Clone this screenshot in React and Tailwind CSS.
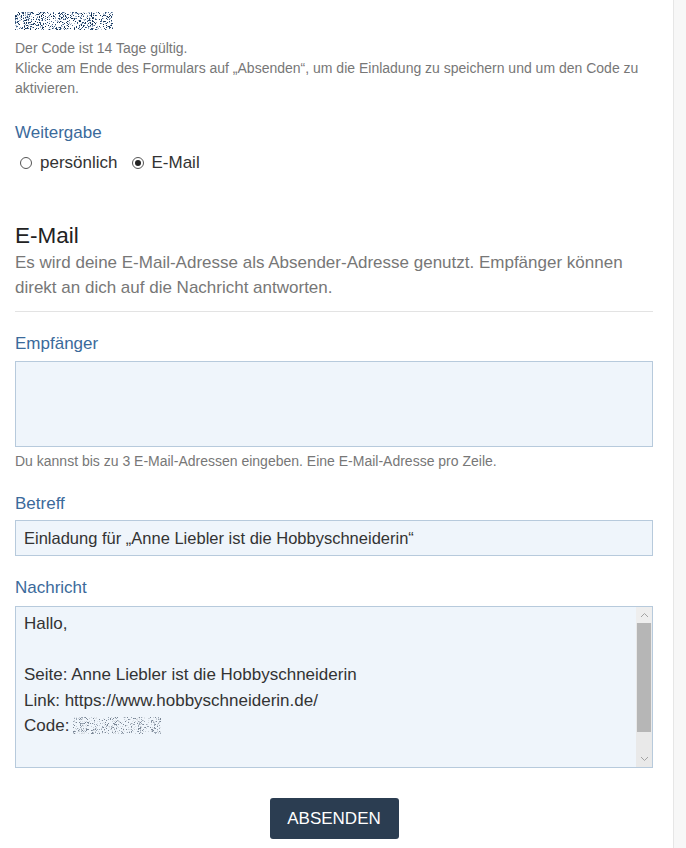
import React from "react";

// pseudo random speckles standing in for the blurred code
const speckles = (w, h, n, seed, colors) => {
  let s = seed;
  const rnd = () => {
    s = (s * 9301 + 49297) % 233280;
    return s / 233280;
  };
  const out = [];
  for (let i = 0; i < n; i++) {
    out.push({
      x: Math.floor(rnd() * w),
      y: Math.floor(rnd() * h),
      c: colors[Math.floor(rnd() * colors.length)],
    });
  }
  return out;
};

function Blur({ w, h, n, seed, colors }) {
  const dots = speckles(w, h, n, seed, colors);
  return (
    <svg width={w} height={h} viewBox={`0 0 ${w} ${h}`} className="block">
      {dots.map((d, i) => (
        <rect key={i} x={d.x} y={d.y} width="1" height="1" fill={d.c} />
      ))}
    </svg>
  );
}

function Radio({ checked, label }) {
  return (
    <label className="flex items-center gap-[8px]">
      <span className="w-[12px] h-[12px] rounded-full border border-[#555] bg-white flex items-center justify-center">
        {checked ? <span className="w-[6px] h-[6px] rounded-full bg-[#222]" /> : null}
      </span>
      <span>{label}</span>
    </label>
  );
}

function Label({ children }) {
  return <div className="text-[17px] leading-[20px] text-[#3b6a9b]">{children}</div>;
}

export default function App() {
  return (
    <div
      className="flex w-[686px] h-[848px] overflow-hidden bg-white"
      style={{ fontFamily: '"Liberation Sans", Arial, sans-serif' }}
    >
      <div className="w-[673px] px-[15px] pr-[20px]">
        <div className="pt-[12px]">
          <Blur w={98} h={18} n={700} seed={7} colors={["#1d3f66", "#4a6a90", "#b8c6d6", "#2a4a70", "#93a6bf", "#0f2a4a"]} />
        </div>

        <div className="mt-[8px] text-[14px] leading-[20px] text-[#777]">
          <div>Der Code ist 14 Tage gültig.</div>
          <div>
            Klicke am Ende des Formulars auf „Absenden“, um die Einladung zu speichern und um den Code zu aktivieren.
          </div>
        </div>

        <div className="mt-[25px]">
          <Label>Weitergabe</Label>
        </div>
        <div className="mt-[10px] flex items-center gap-[14px] pl-[5px] text-[17px] leading-[20px] text-[#333]">
          <Radio label="persönlich" />
          <Radio checked label="E-Mail" />
        </div>

        <div className="mt-[49px] text-[22.5px] leading-[28px] text-[#222]">E-Mail</div>
        <div className="text-[17px] leading-[25px] text-[#777]">
          Es wird deine E-Mail-Adresse als Absender-Adresse genutzt. Empfänger können direkt an dich auf die Nachricht antworten.
        </div>
        <div className="mt-[11px] border-t border-[#e3e3e3]" />

        <div className="mt-[22px]">
          <Label>Empfänger</Label>
        </div>
        <div className="mt-[7px] h-[86px] border border-[#b7cadc] bg-[#eff5fb]" />
        <div className="mt-[6px] text-[14px] leading-[16px] text-[#777]">
          Du kannst bis zu 3 E-Mail-Adressen eingeben. Eine E-Mail-Adresse pro Zeile.
        </div>

        <div className="mt-[25px]">
          <Label>Betreff</Label>
        </div>
        <div className="mt-[6px] h-[36px] border border-[#b7cadc] bg-[#eff5fb] px-[8px] flex items-center text-[16.5px] text-[#333]">
          Einladung für „Anne Liebler ist die Hobbyschneiderin“
        </div>

        <div className="mt-[22px]">
          <Label>Nachricht</Label>
        </div>
        <div className="mt-[8px] h-[162px] border border-[#b7cadc] bg-[#eff5fb] flex">
          <div className="flex-1 px-[8px] pt-[4px] text-[17px] leading-[25.5px] text-[#333]">
            <div>Hallo,</div>
            <div>&nbsp;</div>
            <div>Seite: Anne Liebler ist die Hobbyschneiderin</div>
            <div>Link: https://www.hobbyschneiderin.de/</div>
            <div className="flex items-center gap-[4px]">
              <span>Code:</span>
              <Blur w={88} h={17} n={520} seed={31} colors={["#9aa6b4", "#c9d0d8", "#7b8796", "#dde2e8"]} />
            </div>
          </div>
          <div className="w-[16px] flex flex-col bg-[#e9e9e9]">
            <div className="h-[16px] flex items-center justify-center bg-[#eeeeee]">
              <svg width="9" height="6" viewBox="0 0 9 6">
                <path d="M1 5 L4.5 1.5 L8 5" fill="none" stroke="#a3a3a3" strokeWidth="1" />
              </svg>
            </div>
            <div className="h-[109px] bg-[#b6b6b6] mx-[1px]" />
            <div className="flex-1" />
            <div className="h-[16px] flex items-center justify-center">
              <svg width="9" height="6" viewBox="0 0 9 6">
                <path d="M1 1 L4.5 4.5 L8 1" fill="none" stroke="#a3a3a3" strokeWidth="1" />
              </svg>
            </div>
          </div>
        </div>

        <div className="mt-[30px] flex justify-center">
          <button
            type="button"
            className="w-[129px] h-[41px] rounded-[3px] bg-[#2b3d51] text-white text-[17px] uppercase"
          >
            Absenden
          </button>
        </div>
      </div>

      <div className="w-[13px] border-l border-[#e6e6e6] bg-[#f7f7f7]" />
    </div>
  );
}
